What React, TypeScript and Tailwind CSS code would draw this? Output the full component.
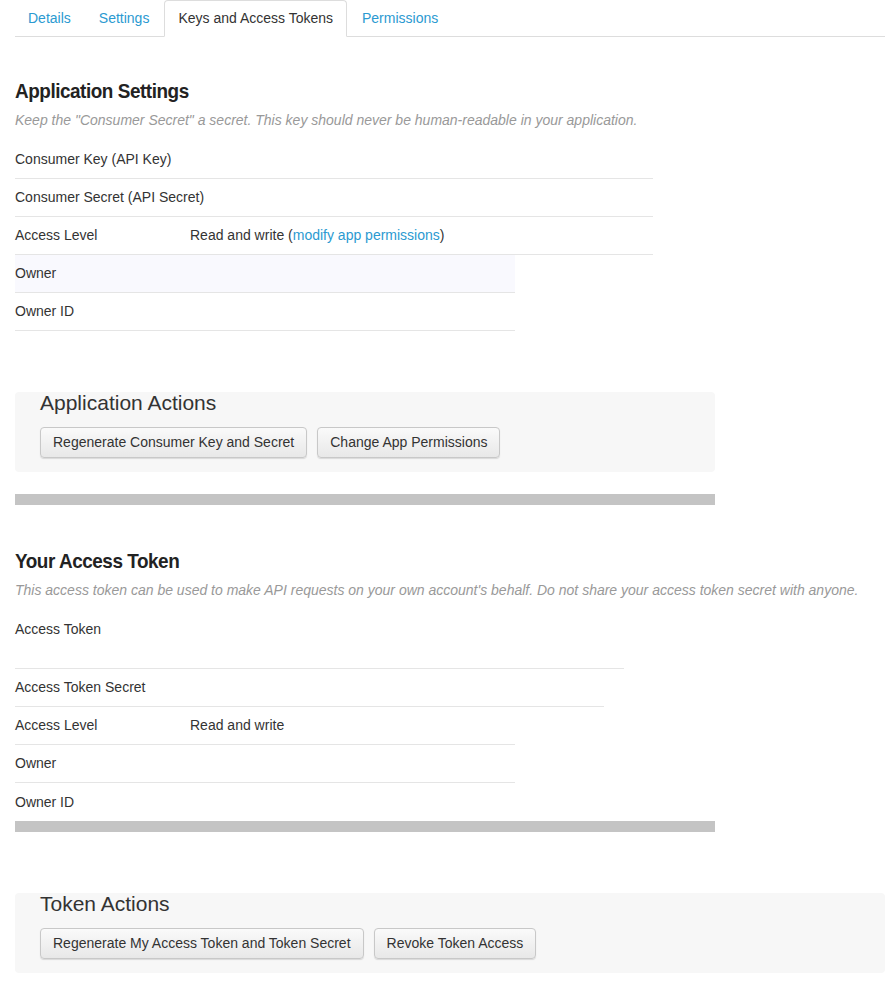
import React from 'react';

const font = { fontFamily: '"Liberation Sans", Arial, sans-serif' };

const Row = ({ label, children, w, tall, tint }: { label: string; children?: React.ReactNode; w: string; tall?: boolean; tint?: boolean }) => (
  <div className={`flex border-b border-[#e5e5e5] ${w} ${tall ? 'h-[60px] items-start pt-[10px]' : 'h-[38px] items-center'} ${tint ? 'bg-[#f9f9fe]' : ''}`}>
    <div className="w-[175px] shrink-0 whitespace-nowrap">{label}</div>
    <div>{children}</div>
  </div>
);

const Btn = ({ children }: { children: React.ReactNode }) => (
  <button className="h-[31px] px-3 rounded border border-[#c8c8c8] bg-gradient-to-b from-[#fafafa] to-[#e8e8e8] text-[14px] text-[#333] shadow-[0_1px_1px_rgba(0,0,0,0.12)] whitespace-nowrap">
    {children}
  </button>
);

export default function App() {
  return (
    <div className="text-[14px] text-[#333] bg-white min-h-[990px] pl-[15px]" style={font}>
      <div className="flex border-b border-[#ddd] h-[37px] text-[14px]">
        <div className="px-[13px] flex items-center text-[#2b9ad1]">Details</div>
        <div className="px-[15px] flex items-center text-[#2b9ad1]">Settings</div>
        <div className="px-[13px] flex items-center border border-[#ddd] border-b-white -mb-px rounded-t bg-white">Keys and Access Tokens</div>
        <div className="px-[15px] flex items-center text-[#2b9ad1]">Permissions</div>
      </div>

      <h2 className="mt-[40px] text-[21px] font-bold text-[#222] leading-[28px] tracking-[-0.5px] scale-x-[0.9] origin-left">Application Settings</h2>
      <p className="italic text-[#999] mt-[5px] mb-[10px]">Keep the "Consumer Secret" a secret. This key should never be human-readable in your application.</p>
      <Row label="Consumer Key (API Key)" w="w-[638px]" />
      <Row label="Consumer Secret (API Secret)" w="w-[638px]" />
      <Row label="Access Level" w="w-[638px]">
        Read and write (<span className="text-[#2b9ad1]">modify app permissions</span>)
      </Row>
      <Row label="Owner" w="w-[500px]" tint />
      <Row label="Owner ID" w="w-[500px]" />

      <div className="mt-[61px] w-[700px] h-[80px] bg-[#f7f7f7] rounded pl-[25px]">
        <div className="text-[21px] leading-[20px] pt-[1px] text-[#333]">Application Actions</div>
        <div className="flex gap-[10px] mt-[14px]">
          <Btn>Regenerate Consumer Key and Secret</Btn>
          <Btn>Change App Permissions</Btn>
        </div>
      </div>
      <div className="mt-[22px] w-[700px] h-[11px] bg-[#c4c4c4]" />

      <h2 className="mt-[42px] text-[21px] font-bold text-[#222] leading-[28px] tracking-[-0.5px] scale-x-[0.9] origin-left">Your Access Token</h2>
      <p className="italic text-[#999] mt-[5px] mb-[8px]">This access token can be used to make API requests on your own account's behalf. Do not share your access token secret with anyone.</p>
      <Row label="Access Token" w="w-[609px]" tall />
      <Row label="Access Token Secret" w="w-[589px]" />
      <Row label="Access Level" w="w-[500px]">Read and write</Row>
      <Row label="Owner" w="w-[500px]" />
      <div className="flex items-center h-[38px] w-[500px]">Owner ID</div>
      <div className="w-[700px] h-[11px] bg-[#c4c4c4]" />

      <div className="mt-[61px] w-[870px] h-[80px] bg-[#f7f7f7] rounded pl-[25px]">
        <div className="text-[21px] leading-[20px] pt-[1px] text-[#333]">Token Actions</div>
        <div className="flex gap-[10px] mt-[14px]">
          <Btn>Regenerate My Access Token and Token Secret</Btn>
          <Btn>Revoke Token Access</Btn>
        </div>
      </div>
    </div>
  );
}
